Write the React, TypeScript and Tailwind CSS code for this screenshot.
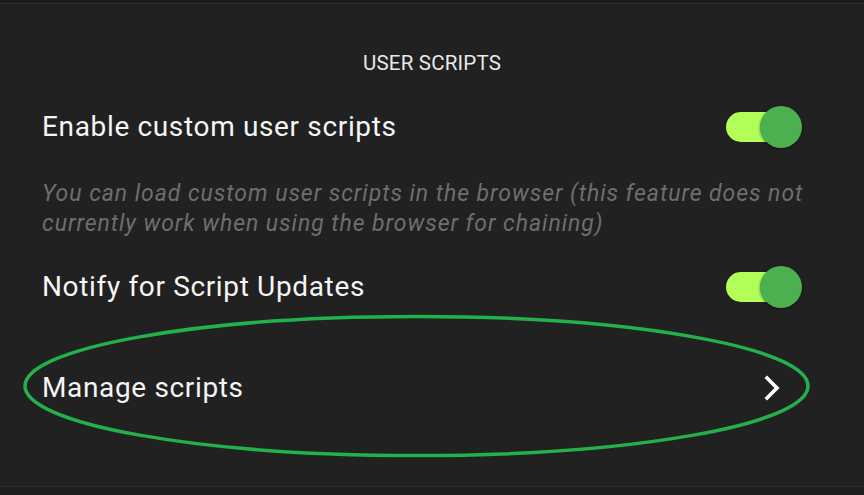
import React from "react";

function Toggle() {
  return (
    <div className="relative w-[76px] h-[42px] flex items-center">
      <div className="w-[70px] h-[30px] rounded-full bg-[#b2ff59]" />
      <div className="absolute right-[0px] top-0 w-[42px] h-[42px] rounded-full bg-[#4caf50] shadow-[0_1px_3px_rgba(0,0,0,0.5)]" />
    </div>
  );
}

export default function App() {
  return (
    <div
      className="relative w-[864px] h-[495px] bg-[#212121] flex flex-col overflow-hidden"
      style={{ fontFamily: "Roboto, 'Liberation Sans', sans-serif" }}
    >
      <div className="h-[3px] bg-[#1c1c1c]" />
      <div className="h-px bg-[#2e2e2e]" />
      <div className="mt-[36px] h-[46px] flex items-center justify-center text-[20.5px] tracking-[0.2px] text-[#e8e8e8]">
        USER SCRIPTS
      </div>
      <div className="mt-[14px] h-[54px] flex items-center justify-between pl-[42px] pr-[62px]">
        <span className="text-[28px] tracking-[0.65px] text-[#f5f5f5]">Enable custom user scripts</span>
        <Toggle />
      </div>
      <div className="mt-[25px] pl-[42px] pr-[20px] text-[23px] leading-[30px] tracking-[0.95px] italic text-[#6e6e6e]">
        You can load custom user scripts in the browser (this feature does not
        <br />
        currently work when using the browser for chaining)
      </div>
      <div className="mt-[21px] h-[54px] flex items-center justify-between pl-[42px] pr-[62px]">
        <span className="text-[28px] tracking-[0.65px] text-[#f5f5f5]">Notify for Script Updates</span>
        <Toggle />
      </div>
      <div className="mt-[47px] h-[54px] flex items-center justify-between pl-[42px] pr-[84px]">
        <span className="text-[28px] tracking-[0.65px] text-[#f5f5f5]">Manage scripts</span>
        <svg width="16" height="26" viewBox="0 0 16 26">
          <polyline points="3,3 13,13 3,23" fill="none" stroke="#ffffff" strokeWidth="3.6" strokeLinecap="square" />
        </svg>
      </div>
      <div className="mt-[71px] h-px bg-[#2e2e2e]" />
      <div className="flex-1 bg-[#1f1f1f]" />
      <svg className="absolute left-0 top-0 pointer-events-none" width="864" height="495">
        <ellipse cx="416.5" cy="386" rx="391.5" ry="69.5" fill="none" stroke="#22b14c" strokeWidth="3.5" />
      </svg>
    </div>
  );
}
